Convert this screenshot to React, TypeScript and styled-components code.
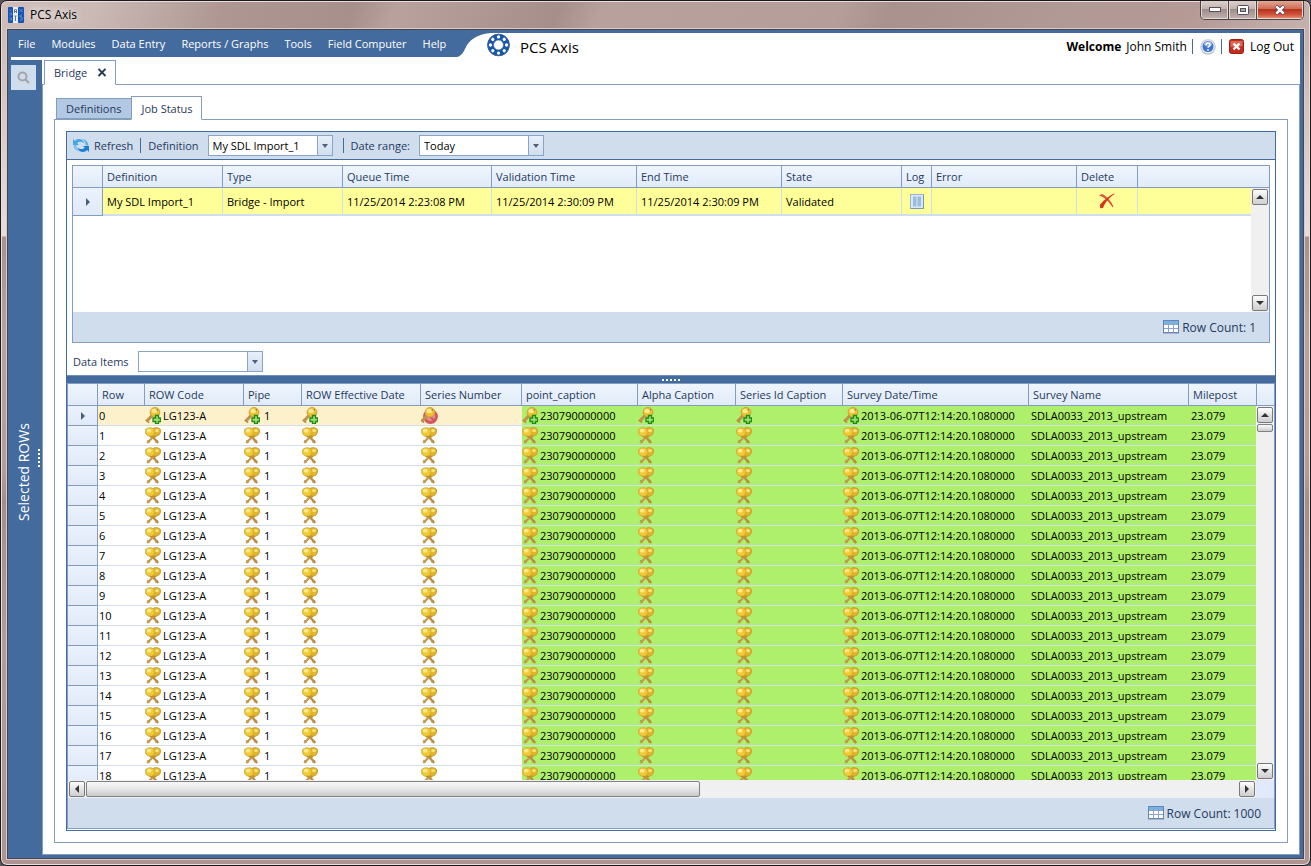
import React from "react";
import styled, { createGlobalStyle, css } from "styled-components";

const c = {
  blue: "#446b9d",
  line: "#839cbf",
  pale: "#d0dded",
  text: "#1f3a60",
  green: "#aeef6c",
  rowLine: "#d3dfec",
};

const Global = createGlobalStyle`
  *, *::before, *::after { box-sizing: border-box; }
  html, body { margin: 0; background: #55565c; }
  body, button, select {
    font-family: "Open Sans", "Noto Sans", sans-serif;
    font-size: 11px;
    color: #000;
  }
  button { margin: 0; padding: 0; border: 0; background: none; cursor: pointer; }
  svg { display: block; flex: none; }
`;

/* ---------- window frame ---------- */

const Frame = styled.div`
  height: 100vh;
  min-height: 600px;
  display: flex;
  flex-direction: column;
  padding: 0 6px 6px;
  border: 1px solid #1c1a1e;
  border-radius: 7px;
  overflow: hidden;
  box-shadow: inset 0 0 0 1px #e9dddb;
  background:
    linear-gradient(180deg, #cdb6b100 0, #e8dddb 206px, #a9918e 207px, #b9a19d 311px, #b59c98 441px, #a58d8a 471px, #b49b97 611px, #ad9490 100%) 0 29px / 100% 100% no-repeat,
    linear-gradient(112deg, #cfbdb9 0, #cbb9b5 90px, #ae9793 210px, #a78f8b 330px, #b9a19d 370px, #ab938f 480px, #a68e8a 520px, #b8a09c 560px, #b59d99 780px, #a9918d 830px, #b19995 1000px, #b59a96 1110px, #c3afab 1210px, #d6c8c5 100%);
`;

const TitleBar = styled.header`
  height: 27px;
  flex: none;
  display: flex;
  align-items: center;
  gap: 6px;
  padding-left: 1px;
`;

const TitleText = styled.h1`
  margin: 0;
  font-size: 12px;
  font-weight: 400;
  text-shadow: 0 0 8px #fff, 0 0 10px #fff;
`;

const WindowButtons = styled.div`
  display: flex;
  align-self: flex-start;
  margin-left: auto;
  height: 19px;
  border: 1px solid #4c4346;
  border-top: 0;
  border-radius: 0 0 5px 5px;
  overflow: hidden;
`;

const WindowButton = styled.button<{ $close?: boolean }>`
  width: ${(p) => (p.$close ? 46 : 27)}px;
  display: flex;
  align-items: center;
  justify-content: center;
  border: 1px solid #e2d8d6;
  border-top: 0;
  background: ${(p) =>
    p.$close
      ? "linear-gradient(#e3a795, #cf6d57 45%, #b8311a 50%, #d0553a 80%, #e58a6c)"
      : "linear-gradient(#dccfcc, #c4b3b0 45%, #9f8d8c 50%, #bfaeab)"};
  & + & { box-shadow: -1px 0 0 #4c4346; margin-left: 1px; }
`;

const Client = styled.div`
  flex: 1;
  min-height: 0;
  display: flex;
  flex-direction: column;
  margin-top: 1px;
  padding: 3px;
  border: 1px solid #47454e;
  box-shadow: 0 0 0 1px #d8cccb;
  background: ${c.blue};
`;

/* ---------- application header ---------- */

const AppHeader = styled.div`
  flex: none;
  height: 24px;
  display: flex;
  background: #fff;
`;

const Menu = styled.nav`
  display: flex;
  align-items: center;
  gap: 16px;
  flex: none;
  width: 446px;
  padding: 0 0 3px 7px;
  background: ${c.blue};
`;

const MenuItem = styled.button`
  color: #fff;
  white-space: nowrap;
`;

const Curve = styled.svg`
  width: 30px;
  height: 24px;
  overflow: visible;
`;

const Brand = styled.div`
  display: flex;
  align-items: center;
  gap: 10px;
  font-size: 15px;
`;

const BrandName = styled.span`
  padding-top: 4px;
`;

const UserBar = styled.div`
  display: flex;
  align-items: center;
  margin-left: auto;
  padding: 3px 6px 0 0;
  gap: 5px;
  font-size: 12px;
  white-space: nowrap;
`;

const Bar = styled.span`
  width: 1px;
  height: 15px;
  background: ${c.blue};
`;

const HelpButton = styled.button`
  padding-left: 2px;
`;

const LogOut = styled.button`
  display: flex;
  align-items: center;
  gap: 5px;
  padding-left: 2px;
  font-size: 12px;
`;

/* ---------- body ---------- */

const Body = styled.div`
  flex: 1;
  min-height: 0;
  display: flex;
`;

const Sidebar = styled.aside`
  flex: none;
  width: 31px;
  display: flex;
  border-top: 3px solid #fff;
`;

const SideMain = styled.div`
  width: 25px;
  display: flex;
  flex-direction: column;
  padding-top: 5px;
`;

const SearchButton = styled.button`
  width: 25px;
  height: 25px;
  display: flex;
  align-items: center;
  justify-content: center;
  background: ${c.pale};
`;

const SideLabel = styled.div`
  flex: 1;
  display: flex;
  align-items: center;
  justify-content: center;
  writing-mode: vertical-rl;
  transform: rotate(180deg);
  color: #fff;
  font-size: 14px;
  line-height: 22px;
`;

const Grip = styled.div<{ $vertical?: boolean }>`
  flex: 1;
  display: flex;
  flex-direction: ${(p) => (p.$vertical ? "column" : "row")};
  align-items: center;
  justify-content: center;
  gap: 2px;
  & > i { width: 2px; height: 2px; background: #fff; }
`;

const Main = styled.main`
  flex: 1;
  min-width: 0;
  display: flex;
  flex-direction: column;
  padding-top: 3px;
  background: #fff;
`;

const TabStrip = styled.div<{ $height: number }>`
  flex: none;
  height: ${(p) => p.$height}px;
  display: flex;
  align-items: flex-end;
  padding-left: 2px;
`;

const Tab = styled.button<{ $active?: boolean; $height: number }>`
  display: flex;
  align-items: center;
  gap: 10px;
  height: ${(p) => p.$height}px;
  padding: 0 ${(p) => (p.$active ? 8 : 10)}px 0 9px;
  border: 1px solid ${c.line};
  color: ${c.text};
  background: ${(p) => (p.$active ? "#fff" : "#b3c8e3")};
  ${(p) =>
    p.$active &&
    css`
      position: relative;
      margin-bottom: -1px;
      border-bottom-color: #fff;
    `}
  & + & { margin-left: -1px; }
`;

const Panel = styled.section<{ $strong?: boolean; $flush?: boolean }>`
  flex: 1;
  min-height: 0;
  display: flex;
  flex-direction: column;
  padding: ${(p) => (p.$flush ? 0 : 11)}px;
  border: 1px solid ${(p) => (p.$strong ? c.blue : c.line)};
  background: #fff;
`;

const Toolbar = styled.div`
  flex: none;
  height: 28px;
  display: flex;
  align-items: center;
  gap: 7px;
  padding-left: 6px;
  border-bottom: 1px solid ${c.blue};
  background: ${c.pale};
  color: ${c.text};
`;

const RefreshButton = styled.button`
  display: flex;
  align-items: center;
  gap: 5px;
  color: ${c.text};
`;

const Field = styled.div`
  display: flex;
  align-items: center;
  gap: 9px;
  color: ${c.text};
`;

const Combo = styled.div`
  width: 125px;
  height: 21px;
  display: flex;
  margin-right: 3px;
  border: 1px solid #8aa4c8;
  background: #fff;
`;

const Select = styled.select`
  appearance: none;
  flex: 1;
  min-width: 0;
  padding: 0 4px;
  border: 0;
  outline: 0;
  background: transparent;
`;

const ComboArrow = styled.span`
  width: 15px;
  display: flex;
  align-items: center;
  justify-content: center;
  border-left: 1px solid #8aa4c8;
  background: linear-gradient(#e6effa, #d3dfee);
  pointer-events: none;
`;

const FilterRow = styled.div`
  flex: none;
  height: 32px;
  display: flex;
  align-items: center;
  padding: 5px 6px 0;
`;

const Splitter = styled.div`
  flex: none;
  height: 8px;
  display: flex;
  border-top: 1px solid #6f90bb;
  background: ${c.blue};
`;

/* ---------- grids ---------- */

const Grid = styled.div<{ $jobs?: boolean }>`
  display: flex;
  flex-direction: column;
  min-height: 0;
  border: 1px solid ${c.line};
  ${(p) =>
    p.$jobs
      ? css`
          flex: none;
          height: 178px;
          margin: 5px 5px 0;
        `
      : css`
          flex: 1;
          margin-bottom: 1px;
        `}
`;

const Viewport = styled.div`
  flex: 1;
  min-height: 0;
  position: relative;
  overflow: hidden;
`;

const Table = styled.table`
  width: 100%;
  table-layout: fixed;
  border-collapse: separate;
  border-spacing: 0;
`;

const HeadCell = styled.th`
  height: 22px;
  padding: 0 4px;
  border-right: 1px solid ${c.line};
  border-bottom: 1px solid ${c.line};
  background: linear-gradient(#eff5fd, #e0ebf8);
  color: ${c.text};
  font-weight: 400;
  text-align: left;
  white-space: nowrap;
  &:last-child { border-right: 0; }
`;

const RowHead = styled.th`
  padding: 0;
  border-right: 1px solid ${c.line};
  border-bottom: 1px solid ${c.line};
  background: linear-gradient(#e9f2fd, #e0e9f6);
  & > svg { margin: 0 auto; }
`;

const JobCell = styled.td`
  height: 28px;
  padding: 0 4px;
  border-right: 1px solid ${c.pale};
  border-bottom: 2px solid ${c.pale};
  background: #ffff99;
  white-space: nowrap;
  & > button { display: block; margin: 0 auto; }
`;

const Cell = styled.td<{ $tone: "plain" | "current" | "green"; $inset: number }>`
  height: 20px;
  padding: 0 0 0 ${(p) => p.$inset}px;
  border-bottom: 1px solid ${c.rowLine};
  background: ${(p) =>
    p.$tone === "green" ? c.green : p.$tone === "current" ? "#fcf1cb" : "#fff"};
  white-space: nowrap;
  overflow: hidden;
`;

const CellContent = styled.div<{ $wide?: boolean }>`
  height: 19px;
  display: flex;
  align-items: center;
  gap: ${(p) => (p.$wide ? 4 : 2)}px;
`;

const Footer = styled.div`
  flex: none;
  height: 30px;
  display: flex;
  align-items: center;
  justify-content: flex-end;
  gap: 3px;
  padding-right: 13px;
  background: ${c.pale};
  color: ${c.text};
  font-size: 12px;
`;

const VTrack = styled.div`
  position: absolute;
  top: 22px;
  right: 0;
  bottom: 0;
  width: 18px;
  display: flex;
  flex-direction: column;
  gap: 1px;
  padding: 1px;
  background: #f0f0f0;
  & > :last-child { margin-top: auto; }
`;

const HRow = styled.div`
  flex: none;
  height: 18px;
  display: flex;
  background: #e0eafa;
`;

const HTrack = styled.div`
  flex: 1;
  display: flex;
  gap: 1px;
  padding: 1px;
  margin-right: 18px;
  background: #f0f0f0;
  & > :last-child { margin-left: auto; }
`;

const ScrollButton = styled.button`
  width: 16px;
  height: 16px;
  flex: none;
  display: flex;
  align-items: center;
  justify-content: center;
  border: 1px solid #77797c;
  border-radius: 2px;
  background: linear-gradient(#fefefe, #e4e4e4 50%, #cfcfcf);
`;

const Thumb = styled.div<{ $horizontal?: boolean }>`
  border: 1px solid #808284;
  border-radius: 2px;
  background: linear-gradient(#f8f8f8, #e6e6e6 50%, #c9c9c9);
  ${(p) =>
    p.$horizontal
      ? css`
          width: calc(52% - 3px);
          height: 16px;
        `
      : css`
          width: 16px;
          height: 8px;
        `}
`;

/* ---------- icons ---------- */

const Arrow = ({ dir, color = "#333" }: { dir: "up" | "down" | "left" | "right"; color?: string }) => {
  const d = {
    up: "M0 6L4 2L8 6Z",
    down: "M0 2L4 6L8 2Z",
    left: "M6 0L2 4L6 8Z",
    right: "M2 0L6 4L2 8Z",
  }[dir];
  return (
    <svg width="8" height="8" viewBox="0 0 8 8" aria-hidden="true">
      <path d={d} fill={color} />
    </svg>
  );
};

const AppIcon = () => (
  <svg width="16" height="16" viewBox="0 0 16 16" aria-hidden="true">
    <rect width="5" height="16" rx="1" fill="#1553b5" />
    <rect x="5" width="5" height="16" fill="#e9eef6" />
    <rect x="10" width="6" height="16" rx="1" fill="#1553b5" />
    <path d="M1.500 3h2M1.500 6h2v2h-2M1.500 11h2v2h-2M11.500 2l3 3m0-3l-3 3M14 8h-2v2h2v3h-2" stroke="#5f8ccf" fill="none" />
    <path d="M6.500 6V3l1-1 1 1v3M6.500 4.500h2M7.500 9v5M6.500 9h2" stroke="#64718a" fill="none" />
  </svg>
);

const BrandIcon = () => (
  <svg width="23" height="24" viewBox="0 0 24 24" aria-hidden="true">
    <circle cx="12" cy="12" r="8.300" fill="none" stroke="#1157b4" strokeWidth="6.600" />
    <circle cx="12" cy="12" r="11.300" fill="none" stroke="#4d6078" strokeWidth="1" />
    <circle cx="12" cy="12" r="5.200" fill="#fff" stroke="#4d6078" strokeWidth="0.800" />
    {[0, 45, 90, 135, 180, 225, 270, 315].map((a) => (
      <circle key={a} cx="12" cy="3.600" r="1.700" fill="#fff" transform={`rotate(${a} 12 12)`} />
    ))}
  </svg>
);

const HelpIcon = () => (
  <svg width="16" height="16" viewBox="0 0 16 16" aria-hidden="true">
    <circle cx="8" cy="8" r="7.700" fill="#bcc3d0" />
    <circle cx="8" cy="7.800" r="6.800" fill="#e3e8f0" />
    <circle cx="8" cy="7.500" r="5.500" fill="#3f74d4" />
    <ellipse cx="8" cy="5" rx="4" ry="2.500" fill="#8fb2ee" />
    <path d="M6 6c0-2.600 4-2.600 4-.3C10 7.300 8 7.300 8 8.800" fill="none" stroke="#fff" strokeWidth="1.500" />
    <circle cx="8" cy="11" r="0.900" fill="#fff" />
  </svg>
);

const LogOutIcon = () => (
  <svg width="16" height="16" viewBox="0 0 16 16" aria-hidden="true">
    <rect x="0.500" y="0.500" width="14" height="14" rx="2" fill="#c62a1b" stroke="#9c2218" />
    <path d="M1.500 2h12v5q-6 2-12 1z" fill="#dd6654" />
    <path d="M4.500 4.500l6 6m0-6l-6 6" stroke="#fff" strokeWidth="2.400" />
  </svg>
);

const SearchIcon = () => (
  <svg width="13" height="13" viewBox="0 0 13 13" fill="none" stroke="#a3a6ab" aria-hidden="true">
    <circle cx="5.500" cy="5.500" r="4" strokeWidth="2" />
    <path d="M8.500 8.500L12 12" strokeWidth="2.400" />
  </svg>
);

const RefreshIcon = () => (
  <svg width="16" height="15" viewBox="0 0 16 15" aria-hidden="true">
    <path d="M0 1v6h6L4.200 5.200C6 3.400 9 3.300 11.500 5.500 10.500 1 5 -.8 2 2.900Z" fill="#45a6e6" />
    <path d="M16 14V8h-6l1.800 1.800C10 11.600 7 11.700 4.500 9.500 5.500 14 11 15.800 14 12.100Z" fill="#1a7fd0" />
    <path d="M.5 7C1 11 3 13 7 13.500 4.500 12 3.600 10 3.600 7Z" fill="#79c0ef" />
    <path d="M15.500 7.500C15 4 13 1.500 9 1 12 2.500 12.700 5 12.700 7.500Z" fill="#5aaeea" />
  </svg>
);

const CloseIcon = () => (
  <svg width="10" height="9" viewBox="0 0 10 9" aria-hidden="true">
    <path d="M1.500 .8l7 7.200M8.500.8L1.500 8" stroke="#243650" strokeWidth="1.800" />
  </svg>
);

const LogIcon = () => (
  <svg width="14" height="15" viewBox="0 0 14 15" aria-hidden="true">
    <rect x="0.500" y="0.500" width="13" height="14" fill="#d9e8f7" stroke="#9ab4d2" />
    <path d="M1 14.500h12.500V1" fill="none" stroke="#7596bd" />
    <rect x="3" y="2.500" width="3.500" height="10" fill="#9dbbdc" />
    <rect x="7.500" y="2.500" width="3.500" height="10" fill="#9dbbdc" />
  </svg>
);

const DeleteIcon = () => (
  <svg width="16" height="16" viewBox="0 0 16 16" fill="none" aria-hidden="true">
    <path d="M.5 2L3.500 1C8 3.500 12 8 14.500 13.500L13.500 14.200C10.500 9.500 6 4.500.5 2.800Z" fill="#dc5540" />
    <path d="M15.500 1.200C11 3.500 6.500 8.500 4 15L1.200 15.200.8 12C4.500 7.500 9.500 3 15 .6Z" fill="#d8351d" />
  </svg>
);

const TableIcon = () => (
  <svg width="16" height="14" viewBox="0 0 16 14" aria-hidden="true">
    <rect x="0.500" y="0.500" width="15" height="12" fill="#fff" stroke="#6484b9" />
    <rect x="1" y="1" width="14" height="3" fill="#72b4e4" />
    <path d="M1 4.500h14M1 8.500h14M5.500 1v11.500M10.500 1v11.500" stroke="#8ba3cd" />
    <path d="M0 13.500h16" stroke="#a8b4cc" />
  </svg>
);

const KeyPair = () => (
  <svg width="16" height="17" viewBox="0 0 16 17" aria-hidden="true">
    <path d="M6.500 8.500L13.200 16" stroke="#b98d45" strokeWidth="2.400" />
    <path d="M9.500 8.500L2.200 16" stroke="#c89c50" strokeWidth="2.400" />
    <path d="M2.200 13.200l2.600 2.200M12.800 13.200l-2.600 2.200" stroke="#b98d45" strokeWidth="1" />
    <path d="M7.500 1.500Q11 -.2 14 1.200T15.500 5.500Q14.500 9 10.500 9.500L8 8Z" fill="#e2b428" stroke="#c39a35" strokeWidth="0.800" />
    <path d="M.6 2.500Q3 .2 6.500.8T10 5Q9.500 8.500 6 9.800 1.500 9 .7 6.500Z" fill="#f0c933" stroke="#cda53c" strokeWidth="0.800" />
    <ellipse cx="4.200" cy="3.700" rx="2.400" ry="1.900" fill="#fbe98c" />
    <ellipse cx="12" cy="3.600" rx="2" ry="1.700" fill="#f8e27b" />
    <path d="M5 9.200q3 1.500 6 0" stroke="#c09328" strokeWidth="1.600" fill="none" />
  </svg>
);

const SingleKey = () => (
  <>
    <path d="M7.500 8L1.500 14.500" stroke="#c2924a" strokeWidth="3.200" />
    <path d="M.8 13l3.400 2.600" stroke="#b98a44" strokeWidth="1.400" />
    <ellipse cx="10" cy="5.300" rx="4.900" ry="4.800" fill="#ecc02f" stroke="#c79f3d" strokeWidth="0.900" />
    <ellipse cx="9.300" cy="4" rx="2.800" ry="2.200" fill="#fbe88b" />
    <circle cx="12.300" cy="2.800" r="0.900" fill="#9b8140" />
  </>
);

const KeyAdd = () => (
  <svg width="16" height="17" viewBox="0 0 16 17" aria-hidden="true">
    <SingleKey />
    <path
      d="M10.500 8.500h3v2.500h2v3.500h-2v2h-3v-2h-2.500v-3.500h2.500z"
      fill="#9be070"
      stroke="#1f8a16"
      strokeWidth="1.300"
    />
  </svg>
);

const KeyDenied = () => (
  <svg width="17" height="17" viewBox="0 0 17 17" aria-hidden="true">
    <circle cx="9.500" cy="9.500" r="6" fill="#e08f8c" stroke="#d4565c" strokeWidth="2.800" />
    <path d="M5.500 6l8 8" stroke="#d4565c" strokeWidth="2" />
    <g transform="translate(-1 0)">
      <SingleKey />
    </g>
  </svg>
);

/* ---------- data ---------- */

const menuItems = ["File", "Modules", "Data Entry", "Reports / Graphs", "Tools", "Field Computer", "Help"];

const jobColumns: [string, number | undefined][] = [
  ["", 30],
  ["Definition", 120],
  ["Type", 120],
  ["Queue Time", 149],
  ["Validation Time", 145],
  ["End Time", 145],
  ["State", 120],
  ["Log", 30],
  ["Error", 145],
  ["Delete", 61],
  ["", undefined],
];

const jobValues = [
  "My SDL Import_1",
  "Bridge - Import",
  "11/25/2014 2:23:08 PM",
  "11/25/2014 2:30:09 PM",
  "11/25/2014 2:30:09 PM",
  "Validated",
];

interface Column {
  title: string;
  width?: number;
  value?: string;
  keyed?: boolean;
  green?: boolean;
  wide?: boolean;
  denied?: boolean;
}

const columns: Column[] = [
  { title: "ROW Code", width: 99, value: "LG123-A", keyed: true },
  { title: "Pipe", width: 58, value: "1", keyed: true, wide: true },
  { title: "ROW Effective Date", width: 119, keyed: true },
  { title: "Series Number", width: 101, keyed: true, denied: true },
  { title: "point_caption", width: 116, value: "230790000000", keyed: true, green: true },
  { title: "Alpha Caption", width: 98, keyed: true, green: true },
  { title: "Series Id Caption", width: 107, keyed: true, green: true },
  { title: "Survey Date/Time", width: 186, value: "2013-06-07T12:14:20.1080000", keyed: true, green: true },
  { title: "Survey Name", width: 160, value: "SDLA0033_2013_upstream", green: true },
  { title: "Milepost", value: "23.079", green: true },
];

const rows = Array.from({ length: 19 }, (_, i) => i);

/* ---------- parts ---------- */

const Dots = ({ vertical }: { vertical?: boolean }) => (
  <Grip $vertical={vertical}>
    <i /><i /><i /><i /><i />
  </Grip>
);

const ComboField = ({ id, label, options }: { id: string; label: string; options: string[] }) => (
  <Field>
    <label htmlFor={id}>{label}</label>
    <Combo>
      <Select id={id} defaultValue={options[0]}>
        {options.map((o) => (
          <option key={o}>{o}</option>
        ))}
      </Select>
      <ComboArrow>
        <svg width="6" height="4" viewBox="0 0 6 4" aria-hidden="true">
          <path d="M0 0h6L3 4z" fill="#4d607e" />
        </svg>
      </ComboArrow>
    </Combo>
  </Field>
);

const RowCount = ({ count }: { count: number }) => (
  <Footer>
    <TableIcon />
    <span>Row Count:</span>
    <span>{count}</span>
  </Footer>
);

const JobGrid = () => (
  <Grid $jobs>
    <Viewport>
      <Table>
        <colgroup>
          {jobColumns.map(([, width], i) => (
            <col key={i} width={width} />
          ))}
        </colgroup>
        <thead>
          <tr>
            {jobColumns.map(([title], i) => (
              <HeadCell key={i}>{title}</HeadCell>
            ))}
          </tr>
        </thead>
        <tbody>
          <tr>
            <RowHead scope="row"><Arrow dir="right" color="#4a5c7c" /></RowHead>
            {jobValues.map((v, i) => (
              <JobCell key={i}>{v}</JobCell>
            ))}
            <JobCell><button aria-label="View log"><LogIcon /></button></JobCell>
            <JobCell />
            <JobCell><button aria-label="Delete job"><DeleteIcon /></button></JobCell>
            <JobCell />
          </tr>
        </tbody>
      </Table>
      <VTrack>
        <ScrollButton aria-label="Scroll up"><Arrow dir="up" /></ScrollButton>
        <ScrollButton aria-label="Scroll down"><Arrow dir="down" /></ScrollButton>
      </VTrack>
    </Viewport>
    <RowCount count={1} />
  </Grid>
);

const DataGrid = () => (
  <Grid>
    <Viewport>
      <Table>
        <colgroup>
          <col width={30} />
          <col width={47} />
          {columns.map((col) => (
            <col key={col.title} width={col.width} />
          ))}
          <col width={17} />
        </colgroup>
        <thead>
          <tr>
            <HeadCell />
            <HeadCell>Row</HeadCell>
            {columns.map((col) => (
              <HeadCell key={col.title}>{col.title}</HeadCell>
            ))}
            <HeadCell />
          </tr>
        </thead>
        <tbody>
          {rows.map((n) => {
            const current = n === 0;
            const base = current ? "current" : "plain";
            return (
              <tr key={n}>
                <RowHead scope="row">{current && <Arrow dir="right" color="#4a5c7c" />}</RowHead>
                <Cell $tone={base} $inset={1}>{n}</Cell>
                {columns.map((col) => (
                  <Cell key={col.title} $tone={col.green ? "green" : base} $inset={col.keyed ? 0 : 2}>
                    <CellContent $wide={col.wide}>
                      {col.keyed && (current ? col.denied ? <KeyDenied /> : <KeyAdd /> : <KeyPair />)}
                      {col.value && <span>{col.value}</span>}
                    </CellContent>
                  </Cell>
                ))}
                <Cell $tone="plain" $inset={0} />
              </tr>
            );
          })}
        </tbody>
      </Table>
      <VTrack>
        <ScrollButton aria-label="Scroll up"><Arrow dir="up" /></ScrollButton>
        <Thumb />
        <ScrollButton aria-label="Scroll down"><Arrow dir="down" /></ScrollButton>
      </VTrack>
    </Viewport>
    <HRow>
      <HTrack>
        <ScrollButton aria-label="Scroll left"><Arrow dir="left" /></ScrollButton>
        <Thumb $horizontal />
        <ScrollButton aria-label="Scroll right"><Arrow dir="right" /></ScrollButton>
      </HTrack>
    </HRow>
    <RowCount count={1000} />
  </Grid>
);

export default function App() {
  return (
    <>
      <Global />
      <Frame>
        <TitleBar>
          <AppIcon />
          <TitleText>PCS Axis</TitleText>
          <WindowButtons>
            <WindowButton aria-label="Minimize">
              <svg width="12" height="5" viewBox="0 0 12 5">
                <rect x="0.500" y="0.500" width="11" height="4" fill="#fff" stroke="#54505c" />
              </svg>
            </WindowButton>
            <WindowButton aria-label="Maximize">
              <svg width="12" height="10" viewBox="0 0 12 10">
                <rect x="0.500" y="0.500" width="11" height="9" rx="1" fill="#fff" stroke="#54505c" />
                <rect x="3.500" y="3.500" width="5" height="3" fill="#b3a3a2" stroke="#54505c" />
              </svg>
            </WindowButton>
            <WindowButton $close aria-label="Close">
              <svg width="12" height="10" viewBox="0 0 12 10">
                <path d="M2 1l8 8M10 1L2 9" stroke="#5a4450" strokeWidth="4" />
                <path d="M2.300 1.300l7.400 7.400M9.700 1.300L2.300 8.700" stroke="#fff" strokeWidth="2.400" />
              </svg>
            </WindowButton>
          </WindowButtons>
        </TitleBar>
        <Client>
          <AppHeader>
            <Menu>
              {menuItems.map((m) => (
                <MenuItem key={m}>{m}</MenuItem>
              ))}
            </Menu>
            <Curve viewBox="0 0 30 24" aria-hidden="true">
              <path d="M0 0H34C22 1 15 5 10 12C7 18 5 23 0 24Z" fill={c.blue} />
            </Curve>
            <Brand>
              <BrandIcon />
              <BrandName>PCS Axis</BrandName>
            </Brand>
            <UserBar>
              <b>Welcome</b>
              <span>John Smith</span>
              <Bar />
              <HelpButton aria-label="Help"><HelpIcon /></HelpButton>
              <Bar />
              <LogOut><LogOutIcon />Log Out</LogOut>
            </UserBar>
          </AppHeader>
          <Body>
            <Sidebar>
              <SideMain>
                <SearchButton aria-label="Search"><SearchIcon /></SearchButton>
                <SideLabel>Selected ROWs</SideLabel>
              </SideMain>
              <Dots vertical />
            </Sidebar>
            <Main>
              <TabStrip $height={24}>
                <Tab $active $height={25}>Bridge <CloseIcon /></Tab>
              </TabStrip>
              <Panel>
                <TabStrip $height={23}>
                  <Tab $height={21}>Definitions</Tab>
                  <Tab $active $height={24}>Job Status</Tab>
                </TabStrip>
                <Panel>
                  <Panel $strong $flush>
                    <Toolbar>
                      <RefreshButton><RefreshIcon />Refresh</RefreshButton>
                      <Bar />
                      <ComboField id="definition" label="Definition" options={["My SDL Import_1"]} />
                      <Bar />
                      <ComboField id="range" label="Date range:" options={["Today"]} />
                    </Toolbar>
                    <JobGrid />
                    <FilterRow>
                      <ComboField id="items" label="Data Items" options={[""]} />
                    </FilterRow>
                    <Splitter><Dots /></Splitter>
                    <DataGrid />
                  </Panel>
                </Panel>
              </Panel>
            </Main>
          </Body>
        </Client>
      </Frame>
    </>
  );
}
